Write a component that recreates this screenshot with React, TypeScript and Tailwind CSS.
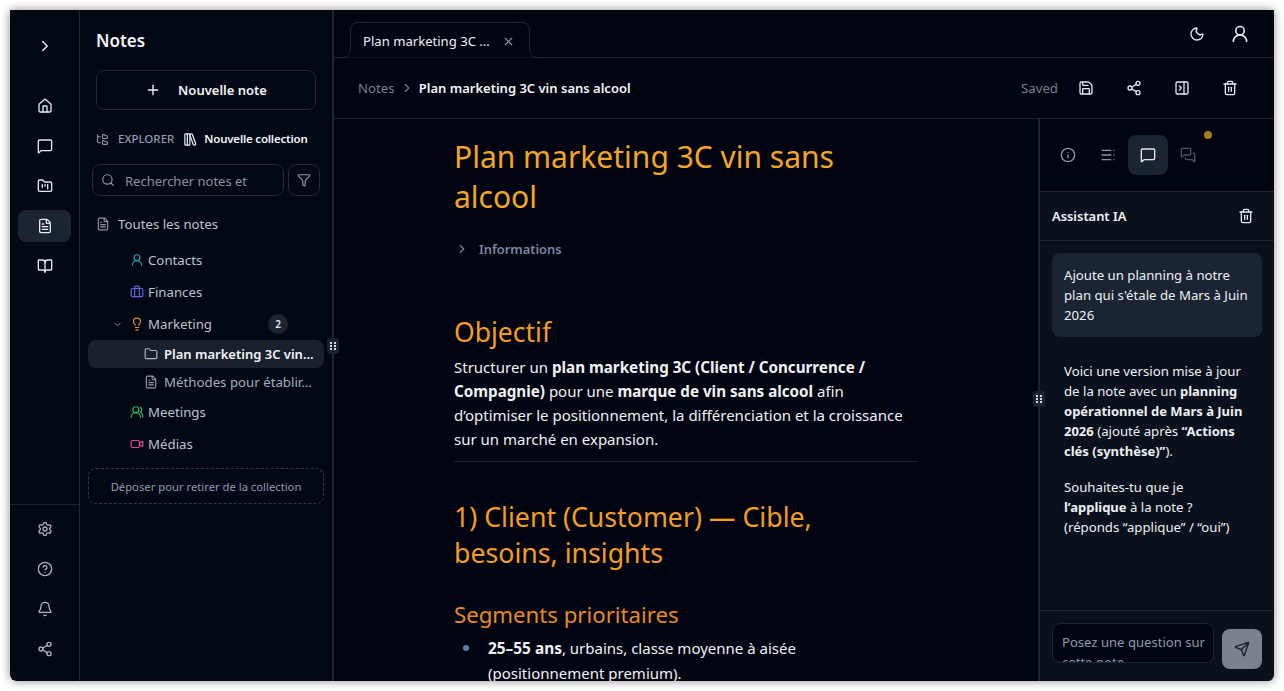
import {
  Bell, BookOpen, Briefcase, ChevronDown, ChevronRight, CircleHelp, FileText, Folder, FolderKanban, FolderTree, Funnel, House, Info,
  LibraryBig, Lightbulb, MessageSquare, MessagesSquare, Moon, PanelRightClose, Plus, Save, Search, Send, Settings, Share2,
  TableOfContents, Trash2, UserRound, UsersRound, Video, X,
} from 'lucide-react';

const font = { fontFamily: '"Noto Sans", sans-serif' };

const Rail = () => (
  <aside className="w-[70px] shrink-0 flex flex-col border-r border-[#1c2532] bg-[#020814] rounded-bl-md">
    <div className="h-[72px] flex items-center justify-center">
      <ChevronRight size={18} className="text-[#e6e9ee]" />
    </div>
    <nav className="flex-1 flex flex-col items-center gap-2 pt-2 text-[#e6e9ee]">
      <div className="h-8 w-[53px] flex items-center justify-center"><House size={16} /></div>
      <div className="h-8 w-[53px] flex items-center justify-center"><MessageSquare size={16} /></div>
      <div className="h-8 w-[53px] flex items-center justify-center"><FolderKanban size={16} /></div>
      <div className="h-8 w-[53px] flex items-center justify-center rounded-lg bg-[#1b2431]"><FileText size={16} /></div>
      <div className="h-8 w-[53px] flex items-center justify-center"><BookOpen size={16} /></div>
    </nav>
    <div className="border-t border-[#1c2532] h-[177px] flex flex-col items-center gap-2 pt-2 text-[#aeb5c0]">
      <div className="h-8 flex items-center"><Settings size={16} /></div>
      <div className="h-8 flex items-center"><CircleHelp size={16} /></div>
      <div className="h-8 flex items-center"><Bell size={16} /></div>
      <div className="h-8 flex items-center"><Share2 size={16} /></div>
    </div>
  </aside>
);

const TreeRow = ({ icon, label }: { icon: React.ReactNode; label: string }) => (
  <div className="h-8 flex items-center gap-[4px] pl-[42px] text-[13.25px] text-[#bcc4cf]">
    <span className="w-[14px] flex justify-center">{icon}</span>
    <span className="pt-[2px]">{label}</span>
  </div>
);

const Grip = ({ className }: { className: string }) => (
  <div className={`absolute z-10 w-3 h-4 rounded-sm bg-[#1b2431] grid grid-cols-2 content-center justify-center gap-[1px] px-[3px] ${className}`}>
    {[0, 1, 2, 3, 4, 5].map((i) => (
      <span key={i} className="w-[2px] h-[2px] bg-[#d7dce3]" />
    ))}
  </div>
);

const Sidebar = () => (
  <aside className="w-[254px] shrink-0 relative border-r-2 border-[#1c2532] bg-[#020814] px-2">
    <h2 className="h-[60px] pt-[19px] pl-2 text-[17px] leading-6 font-semibold text-[#f3f5f7]">Notes</h2>
    <button className="ml-2 w-[220px] h-10 flex items-center justify-center gap-[17px] rounded-lg border border-[#212a38] text-[13px] font-semibold text-[#f3f5f7]">
      <Plus size={16} />
      <span className="pt-[2px]">Nouvelle note</span>
    </button>
    <div className="mt-[19px] pl-2 h-5 flex items-center">
      <FolderTree size={13} className="text-[#8d96a3]" />
      <span className="ml-[9px] text-[11.5px] font-medium text-[#8d9bb0]">EXPLORER</span>
      <LibraryBig size={15} className="ml-[9px] text-[#e6e9ee]" />
      <span className="ml-[6px] text-[11.5px] font-semibold tracking-[-0.2px] text-[#f3f5f7]">Nouvelle collection</span>
    </div>
    <div className="mt-[15px] flex gap-1 pl-1">
      <div className="w-[192px] h-8 flex items-center rounded-lg border border-[#212a38] px-2">
        <Search size={14} className="text-[#8d96a3]" />
        <span className="ml-[10px] pt-1 text-[13px] text-[#8793a3]">Rechercher notes et</span>
      </div>
      <div className="w-8 h-8 flex items-center justify-center rounded-lg border border-[#212a38]">
        <Funnel size={14} className="text-[#8d96a3]" />
      </div>
    </div>
    <div className="mt-3 h-8 flex items-center gap-2 pl-2 text-[13.25px] text-[#bcc4cf]">
      <FileText size={14} className="text-[#8d96a3]" />
      <span className="pt-[2px]">Toutes les notes</span>
    </div>
    <div className="mt-1">
      <TreeRow icon={<UserRound size={14} className="text-[#2aa3b8]" />} label="Contacts" />
      <TreeRow icon={<Briefcase size={14} className="text-[#6366e0]" />} label="Finances" />
      <div className="h-8 flex items-center gap-[4px] pl-[42px] relative text-[13.25px] text-[#bcc4cf]">
        <ChevronDown size={11} className="absolute left-[24px] text-[#8d96a3]" />
        <span className="w-[14px] flex justify-center"><Lightbulb size={14} className="text-[#e08a3c]" /></span>
        <span className="pt-[2px]">Marketing</span>
        <span className="absolute left-[180px] w-5 h-5 rounded-full bg-[#1b2431] flex items-center justify-center text-[10px] font-semibold text-[#e6e9ee]">2</span>
      </div>
      <div className="h-7 flex items-center rounded-lg bg-[#1a212d] pl-[56px] text-[13px] font-semibold text-[#f3f5f7]">
        <Folder size={14} className="text-[#aeb5c0] mr-[6px]" />
        <span className="pt-[2px]">Plan marketing 3C vin...</span>
      </div>
      <div className="h-7 flex items-center pl-[56px] text-[13.25px] text-[#a5adb9]">
        <FileText size={14} className="text-[#8d96a3] mr-[6px]" />
        <span className="pt-[2px]">Méthodes pour établir...</span>
      </div>
      <TreeRow icon={<UsersRound size={14} className="text-[#35b86b]" />} label="Meetings" />
      <TreeRow icon={<Video size={14} className="text-[#e0489a]" />} label="Médias" />
    </div>
    <div className="mt-2 h-[36px] flex items-center justify-center rounded-lg border border-dashed border-[#2e3a48] pt-[3px] text-[11.25px] text-[#8d9bb0]">
      Déposer pour retirer de la collection
    </div>
    <Grip className="right-[-7px] top-[328px]" />
  </aside>
);

const Topbar = () => (
  <div className="h-[48px] shrink-0 flex items-end relative border-b border-[#1c2532] bg-[#010511]">
    <div className="ml-[6px] w-[200px] h-[36px] -mb-[1px] relative flex items-center pl-[23px] text-[13.1px] text-[#eef0f3]">
      <svg className="absolute inset-0" width="200" height="36" viewBox="0 0 200 36" fill="none">
        <path d="M0 35.5H2Q10.5 35.5 10.5 27V8.5Q10.5 .5 18.5 .5H181.5Q189.5 .5 189.5 8.5V27Q189.5 35.5 198 35.5H200" fill="#010511" stroke="#1f2835" />
      </svg>
      <span className="relative pt-1">Plan marketing 3C ...</span>
      <X size={13} className="relative ml-3 mt-[2px] text-[#8d96a3]" />
    </div>
    <div className="ml-auto mr-6 mb-[7px] h-8 flex items-center gap-[25px] text-[#e6e9ee]">
      <Moon size={16} className="-mt-[1px]" />
      <UserRound size={20} className="-mt-[1px]" />
    </div>
  </div>
);

const Toolbar = () => (
  <div className="h-[61px] shrink-0 flex items-center border-b border-[#1c2532] bg-[#010511] pl-6 pr-9">
    <span className="pt-[2px] text-[13.25px] text-[#77818f]">Notes</span>
    <ChevronRight size={14} className="mx-[5px] text-[#77818f]" />
    <span className="pt-[2px] text-[13px] font-semibold text-[#f3f5f7]">Plan marketing 3C vin sans alcool</span>
    <div className="ml-auto flex items-center text-[#e6e9ee]">
      <span className="mr-[20px] pt-[2px] text-[13.25px] text-[#77818f]">Saved</span>
      <Save size={16} />
      <Share2 size={16} className="ml-8" />
      <PanelRightClose size={16} className="ml-8" />
      <Trash2 size={16} className="ml-8" />
    </div>
  </div>
);

const Article = () => (
  <main className="flex-1 min-w-0 overflow-hidden bg-[#010511]">
    <div className="w-[464px] mx-auto pt-[18px]">
      <h1 className="text-[30px] leading-10 text-[#f5a623]">Plan marketing 3C vin sans alcool</h1>
      <div className="mt-5 h-6 flex items-center gap-[10px] text-[12.9px] font-semibold text-[#7b87a0]">
        <ChevronRight size={14} className="ml-[1px]" />
        <span className="pt-[2px]">Informations</span>
      </div>
      <h2 className="mt-[53px] text-[26.5px] leading-[36px] text-[#f59e1e]">Objectif</h2>
      <p className="mt-[5px] text-[15px] leading-6 text-[#f0f2f5] pb-[10px] border-b border-[#1c2532]">
        Structurer un <b className="text-[15.2px]">plan marketing 3C (Client / Concurrence / Compagnie)</b> pour une <b className="text-[15.2px]">marque de vin sans alcool</b> afin d’optimiser le positionnement, la différenciation et la croissance sur un marché en expansion.
      </p>
      <h2 className="mt-[37px] text-[26.7px] leading-[36px] text-[#f59e1e]">1) Client (Customer) — Cible, besoins, insights</h2>
      <h3 className="mt-7 text-[22.2px] leading-8 text-[#e88a24]">Segments prioritaires</h3>
      <ul className="mt-[5px]">
        <li className="flex pr-4 text-[15px] leading-6 text-[#f0f2f5]">
          <span className="w-[34px] shrink-0 pl-[9px] pt-[9px]"><span className="block w-[6px] h-[6px] rounded-full bg-[#5b7bb0]" /></span>
          <span><b className="text-[15.4px]">25–55 ans</b>, urbains, classe moyenne à aisée (positionnement premium).</span>
        </li>
      </ul>
    </div>
  </main>
);

const ChatPanel = () => (
  <aside className="w-[236px] shrink-0 relative flex flex-col border-l-2 border-[#1c2532] bg-[#0a111d]">
    <div className="h-[73px] shrink-0 flex items-center pl-[8px] border-b border-[#1c2532] bg-[#010511] relative">
      <div className="w-10 h-10 flex items-center justify-center text-[#8d96a3]"><Info size={16} /></div>
      <div className="w-10 h-10 flex items-center justify-center text-[#8d96a3]"><TableOfContents size={16} /></div>
      <div className="w-10 h-10 flex items-center justify-center rounded-lg bg-[#1b2431] text-[#e6e9ee]"><MessageSquare size={16} /></div>
      <div className="w-10 h-10 flex items-center justify-center text-[#4b5462]"><MessagesSquare size={16} /></div>
      <span className="absolute left-[164px] top-[12px] w-2 h-2 rounded-full bg-[#a67c1a]" />
    </div>
    <div className="h-[49px] shrink-0 flex items-center justify-between pl-3 pr-[20px] border-b border-[#1c2532]">
      <span className="pt-[2px] text-[12.9px] font-semibold text-[#f3f5f7]">Assistant IA</span>
      <Trash2 size={16} className="text-[#e6e9ee]" />
    </div>
    <div className="flex-1 min-h-0 px-3 pt-3">
      <div className="rounded-lg bg-[#1a2433] p-3 text-[13.2px] leading-5 text-[#eef0f3]">
        Ajoute un planning à notre plan qui s'étale de Mars à Juin 2026
      </div>
      <div className="mt-6 px-3 text-[13.2px] leading-5 text-[#eef0f3]">
        <p>Voici une version mise à jour de la note avec un <b className="text-[13px]">planning opérationnel de Mars à Juin 2026</b> (ajouté après <b className="text-[13px]">“Actions clés (synthèse)”</b>).</p>
        <p className="mt-4">Souhaites-tu que je<br /><b className="text-[13px]">l’applique</b> à la note ?<br />(réponds “applique” / “oui”)</p>
      </div>
    </div>
    <div className="h-[71px] shrink-0 flex items-start gap-2 px-3 pt-3 border-t border-[#1c2532]">
      <div className="flex-1 h-10 overflow-hidden rounded-lg border border-[#1c2532] bg-[#010511] pl-[9px] pr-[2px] pt-[8px] text-[13.1px] leading-[20px] text-[#8d9bb0]">
        Posez une question sur cette note
      </div>
      <div className="w-10 h-10 mt-[6px] rounded-lg bg-[#7b818d] flex items-center justify-center text-[#1a212d]"><Send size={16} /></div>
    </div>
    <Grip className="left-[-7px] top-[272px]" />
  </aside>
);

export default function App() {
  return (
    <div className="w-screen h-screen overflow-hidden bg-white p-[10px]" style={font}>
      <div className="h-full flex overflow-hidden rounded-b-md shadow-[0_0_10px_rgba(0,0,0,0.45)]">
        <Rail />
        <Sidebar />
        <div className="flex-1 min-w-0 flex flex-col">
          <Topbar />
          <Toolbar />
          <div className="flex-1 min-h-0 flex">
            <Article />
            <ChatPanel />
          </div>
        </div>
      </div>
    </div>
  );
}
